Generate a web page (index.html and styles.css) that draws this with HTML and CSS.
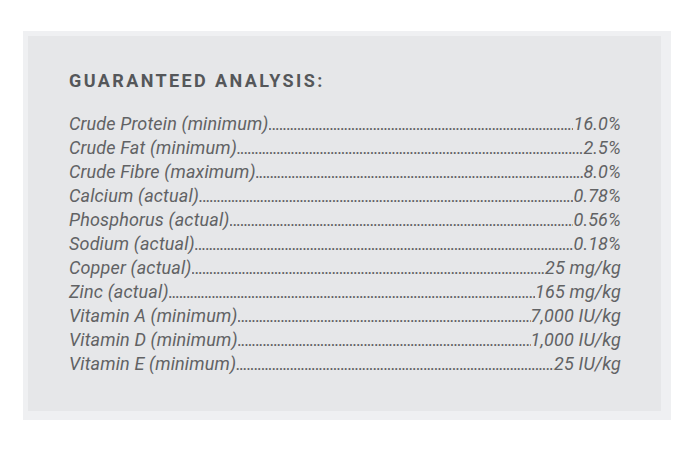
FILE: index.html
```html
<!DOCTYPE html>
<html>
<head>
<meta charset="utf-8">
<link rel="stylesheet" href="styles.css">
</head>
<body>
<div class="frame">
  <section class="card">
    <h2 class="title">GUARANTEED ANALYSIS:</h2>
    <ul class="rows">
      <li class="row"><span class="label">Crude Protein (minimum)</span><span class="leader"></span><span class="value">16.0%</span></li>
      <li class="row"><span class="label">Crude Fat (minimum)</span><span class="leader"></span><span class="value">2.5%</span></li>
      <li class="row"><span class="label">Crude Fibre (maximum)</span><span class="leader"></span><span class="value">8.0%</span></li>
      <li class="row"><span class="label">Calcium (actual)</span><span class="leader"></span><span class="value">0.78%</span></li>
      <li class="row"><span class="label">Phosphorus (actual)</span><span class="leader"></span><span class="value">0.56%</span></li>
      <li class="row"><span class="label">Sodium (actual)</span><span class="leader"></span><span class="value">0.18%</span></li>
      <li class="row"><span class="label">Copper (actual)</span><span class="leader"></span><span class="value">25 mg/kg</span></li>
      <li class="row"><span class="label">Zinc (actual)</span><span class="leader"></span><span class="value">165 mg/kg</span></li>
      <li class="row"><span class="label">Vitamin A (minimum)</span><span class="leader"></span><span class="value">7,000 IU/kg</span></li>
      <li class="row"><span class="label">Vitamin D (minimum)</span><span class="leader"></span><span class="value">1,000 IU/kg</span></li>
      <li class="row"><span class="label">Vitamin E (minimum)</span><span class="leader"></span><span class="value">25 IU/kg</span></li>
    </ul>
  </section>
</div>
</body>
</html>
```

FILE: styles.css
```css
html, body {
  margin: 0;
  padding: 0;
  background: #ffffff;
}
body {
  padding: 31px 0 0 23px;
  font-family: Roboto, "Noto Sans", sans-serif;
}
.frame {
  width: 633px;
  background: #eff0f2;
  padding: 5px 10px 9px 5px;
}
.card {
  background: #e6e7e9;
  height: 375px;
  box-sizing: border-box;
  padding: 33px 40px 0 41px;
}
.title {
  margin: 0 0 19px 0;
  font-size: 18px;
  line-height: 24px;
  font-weight: 700;
  letter-spacing: 2.4px;
  color: #55575a;
}
.rows {
  list-style: none;
  margin: 0;
  padding: 0;
}
.row {
  display: flex;
  align-items: baseline;
  height: 24px;
  font-size: 18px;
  line-height: 24px;
  letter-spacing: 0.15px;
  font-style: italic;
  color: #616264;
}
.label, .value {
  white-space: nowrap;
  flex: none;
}
.leader {
  flex: 1;
  overflow: hidden;
  white-space: nowrap;
  letter-spacing: -1px;
  color: #5e5f61;
}
.leader::after {
  content: "........................................................................................................................................................................................................................................................";
}
```
